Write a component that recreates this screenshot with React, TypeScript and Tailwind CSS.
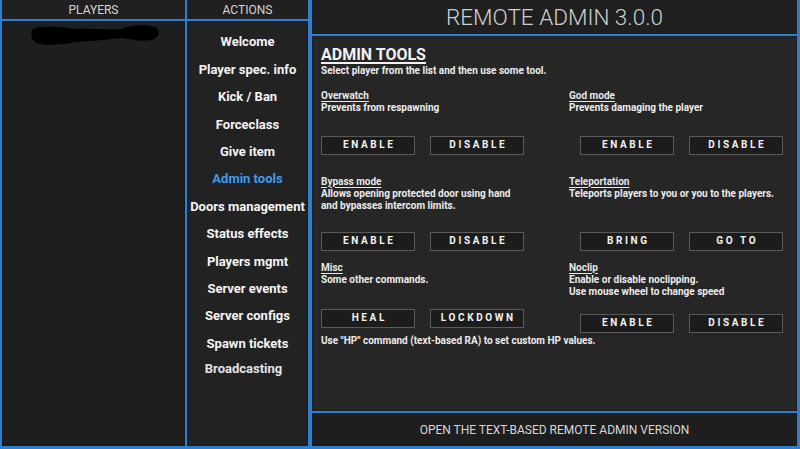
import React from "react";

const BLUE = "bg-[#2f7fd1]";

function Btn({ label, className = "" }: { label: string; className?: string }) {
  return (
    <div
      className={
        "w-[94px] h-[19px] border border-[#5a5a5a] bg-[#1c1c1c] flex items-center justify-center text-[10px] font-bold tracking-[2.6px] pl-[2.6px] text-[#f2f2f2] leading-none " +
        className
      }
    >
      {label}
    </div>
  );
}

function Cell({
  title,
  desc,
  buttons,
  mt,
  ml = "",
}: {
  title: string;
  desc: string[];
  buttons: string[];
  mt: string;
  ml?: string;
}) {
  return (
    <div className="flex flex-col">
      <div className="text-[10px] font-bold leading-[12px] underline underline-offset-[1.5px] text-[#e8e8e8]">
        {title}
      </div>
      {desc.map((d) => (
        <div key={d} className="text-[10px] font-bold leading-[12.5px] text-[#ececec]">
          {d}
        </div>
      ))}
      <div className={"flex " + mt + " " + ml}>
        <Btn label={buttons[0]} />
        <Btn label={buttons[1]} className="ml-[15px]" />
      </div>
    </div>
  );
}

const actions = [
  "Welcome",
  "Player spec. info",
  "Kick / Ban",
  "Forceclass",
  "Give item",
  "Admin tools",
  "Doors management",
  "Status effects",
  "Players mgmt",
  "Server events",
  "Server configs",
  "Spawn tickets",
];

export default function App() {
  return (
    <div
      className={"w-[800px] h-[449px] flex pl-[2px] pr-[3px] pb-[3px] overflow-hidden " + BLUE}
      style={{ fontFamily: "Roboto, 'Liberation Sans', sans-serif" }}
    >
      {/* Players */}
      <div className="w-[183px] flex flex-col gap-[2px]">
        <div className="h-[19px] bg-[#202020] flex items-center justify-center text-[12px] text-[#d4d4d4] leading-none">
          PLAYERS
        </div>
        <div className="flex-1 bg-[#1e1e1e] border border-[#191919] relative">
          <svg className="absolute left-[27px] top-[1px]" width="130" height="24" viewBox="0 0 130 24">
            <path
              d="M3 6 C15 2 30 4 45 6 C60 5 75 7 90 6 C100 2 115 1 125 4 C131 8 130 14 122 17 C110 19 100 16 92 15 C75 17 60 18 45 19 C30 22 15 23 6 20 C1 16 0 10 3 6 Z"
              fill="#000"
            />
          </svg>
        </div>
      </div>

      {/* Actions */}
      <div className="w-[121px] ml-[2px] flex flex-col gap-[2px]">
        <div className="h-[19px] bg-[#202020] flex items-center justify-center text-[12px] text-[#d4d4d4] leading-none">
          ACTIONS
        </div>
        <div className="flex-1 bg-[#222222] border border-[#1a1a1a] flex flex-col items-center pt-[6.5px]">
          {actions.map((a) => (
            <div
              key={a}
              className={
                "h-[27.4px] flex items-center text-[13px] font-bold whitespace-nowrap " +
                (a === "Admin tools" ? "text-[#3d9cec]" : "text-[#f4f4f4]")
              }
            >
              {a}
            </div>
          ))}
          <div className="h-[20px] mt-[1.5px] flex items-center text-[13px] font-bold text-[#e4e4e4] pr-[8px]">
            Broadcasting
          </div>
        </div>
      </div>

      {/* Right */}
      <div className="w-[485px] ml-[4px] flex flex-col gap-[2px]">
        <div className="h-[34px] bg-[#1f1f1f] flex items-center justify-center text-[22.5px] font-light text-[#cfcfcf] leading-none">
          REMOTE ADMIN 3.0.0
        </div>
        <div className="flex-1 bg-[#262626] border border-[#1c1c1c] pl-[8px] pt-[9px] text-[#f0f0f0]">
          <div className="text-[16px] font-bold leading-[18px] underline underline-offset-[2px] decoration-[1.5px] text-[#f2f2f2]">
            ADMIN TOOLS
          </div>
          <div className="text-[10px] font-bold leading-[12px] mt-[1px] text-[#ececec]">
            Select player from the list and then use some tool.
          </div>
          <div className="grid grid-cols-[248px_1fr] mt-[12.5px]">
            <div className="h-[86px]">
              <Cell title="Overwatch" desc={["Prevents from respawning"]} buttons={["ENABLE", "DISABLE"]} mt="mt-[21.5px]" />
            </div>
            <div className="h-[86px]">
              <Cell
                title="God mode"
                desc={["Prevents damaging the player"]}
                buttons={["ENABLE", "DISABLE"]}
                mt="mt-[21.5px]"
                ml="ml-[11px]"
              />
            </div>
            <div className="h-[86px]">
              <Cell
                title="Bypass mode"
                desc={["Allows opening protected door using hand", "and bypasses intercom limits."]}
                buttons={["ENABLE", "DISABLE"]}
                mt="mt-[19px]"
              />
            </div>
            <div className="h-[86px]">
              <Cell
                title="Teleportation"
                desc={["Teleports players to you or you to the players."]}
                buttons={["BRING", "GO TO"]}
                mt="mt-[31.5px]"
                ml="ml-[11px]"
              />
            </div>
            <div>
              <Cell title="Misc" desc={["Some other commands."]} buttons={["HEAL", "LOCKDOWN"]} mt="mt-[22.5px]" />
              <div className="text-[10px] font-bold leading-[12px] mt-[7px] whitespace-nowrap text-[#ececec]">
                Use "HP" command (text-based RA) to set custom HP values.
              </div>
            </div>
            <div>
              <Cell
                title="Noclip"
                desc={["Enable or disable noclipping.", "Use mouse wheel to change speed"]}
                buttons={["ENABLE", "DISABLE"]}
                mt="mt-[15px]"
                ml="ml-[11px]"
              />
            </div>
          </div>
        </div>
        <div className="h-[33px] bg-[#1e1e1e] border border-[#191919] flex items-center justify-center text-[12px] text-[#d8d8d8] leading-none">
          OPEN THE TEXT-BASED REMOTE ADMIN VERSION
        </div>
      </div>
    </div>
  );
}
